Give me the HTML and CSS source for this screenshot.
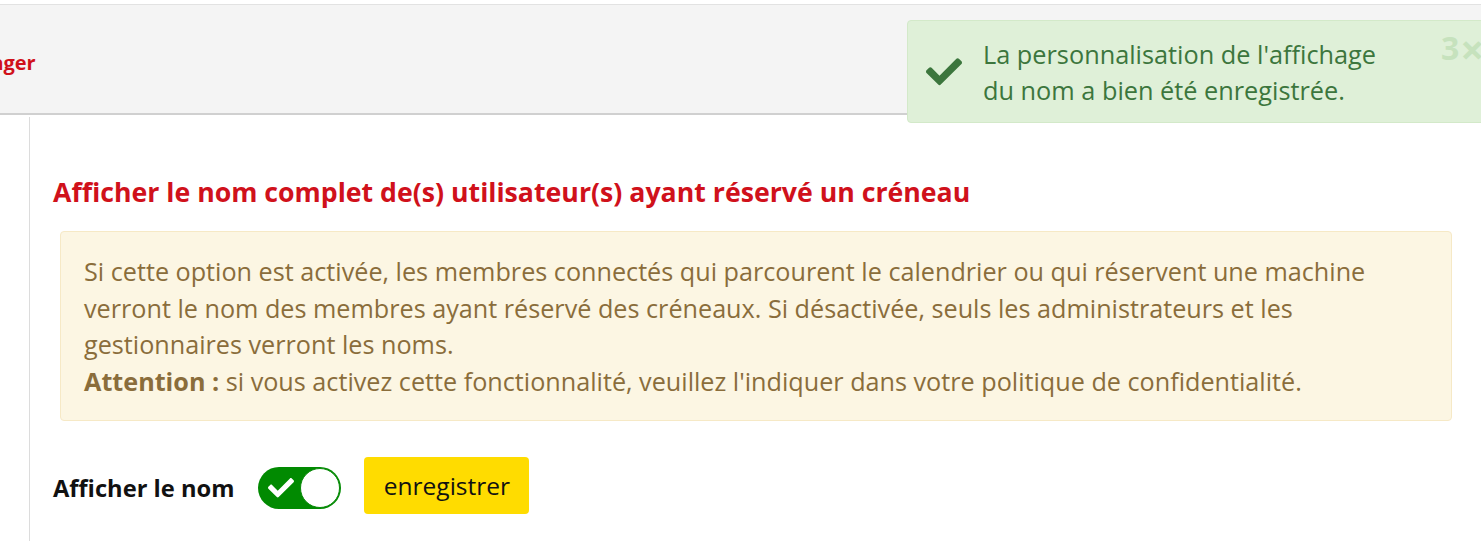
FILE: index.html
```html
<!DOCTYPE html>
<html lang="fr">
<head>
<meta charset="utf-8">
<title>Affichage du nom</title>
<link rel="stylesheet" href="styles.css">
</head>
<body>
<header class="topbar">
  <span class="topbar-title">Aménager</span>
</header>
<div class="layout">
  <aside class="sidebar"></aside>
  <main class="content">
    <h2 class="section-title">Afficher le nom complet de(s) utilisateur(s) ayant réservé un créneau</h2>
    <div class="notice">
      Si cette option est activée, les membres connectés qui parcourent le calendrier ou qui réservent une machine verront le nom des membres ayant réservé des créneaux. Si désactivée, seuls les administrateurs et les gestionnaires verront les noms.<br>
      <strong>Attention :</strong> si vous activez cette fonctionnalité, veuillez l'indiquer dans votre politique de confidentialité.
    </div>
    <form class="form-row">
      <span class="form-label">Afficher le nom</span>
      <span class="toggle">
        <svg class="toggle-check" viewBox="0 64 512 392" width="26" height="20"><path fill="#fff" d="M173.9 439.4 7.5 273c-10-10-10-26.2 0-36.2l36.2-36.2c10-10 26.2-10 36.2 0L192 312.7 432.1 72.6c10-10 26.2-10 36.2 0l36.2 36.2c10 10 10 26.2 0 36.2L210.1 439.4c-10 10-26.2 10-36.2 0z"/></svg>
        <span class="toggle-knob"></span>
      </span>
      <button type="button" class="btn-save">enregistrer</button>
    </form>
  </main>
</div>
<div class="toast">
  <svg class="toast-icon" viewBox="0 64 512 392" width="36" height="28"><path fill="#3c763d" d="M173.9 439.4 7.5 273c-10-10-10-26.2 0-36.2l36.2-36.2c10-10 26.2-10 36.2 0L192 312.7 432.1 72.6c10-10 26.2-10 36.2 0l36.2 36.2c10 10 10 26.2 0 36.2L210.1 439.4c-10 10-26.2 10-36.2 0z"/></svg>
  <p class="toast-text">La personnalisation de l'affichage du nom a bien été enregistrée.</p>
  <span class="toast-count">3<span class="toast-times">×</span></span>
</div>
</body>
</html>
```
FILE: styles.css
```css
html, body {
  margin: 0;
  padding: 0;
  overflow: hidden;
  background: #fff;
}
body {
  font-family: "Open Sans", "Noto Sans", sans-serif;
  color: #000;
  position: relative;
  height: 541px;
}
.topbar {
  margin-top: 4px;
  height: 108px;
  background: #f4f4f4;
  border-top: 1px solid #e2e2e2;
  border-bottom: 2px solid #d0d0d0;
  display: flex;
  align-items: center;
  overflow: hidden;
}
.topbar-title {
  color: #d0111b;
  font-weight: 700;
  font-size: 20px;
  margin-left: -67px;
  margin-top: 6px;
}
.layout {
  display: flex;
  height: 426px;
}
.sidebar {
  width: 29px;
  margin-top: 2px;
  border-right: 1px solid #dcdcdc;
  flex: none;
}
.content {
  flex: 1;
  padding: 61px 29px 0 23px;
}
.section-title {
  margin: 0;
  font-size: 26.7px;
  line-height: 32px;
  font-weight: 700;
  color: #d0111b;
}
.notice {
  margin: 23px 0 0 7px;
  padding: 21px 23px 21px;
  background: #fcf6e3;
  border: 1px solid #f6e9c6;
  border-radius: 4px;
  color: #8a6d3b;
  font-size: 25.2px;
  line-height: 36.5px;
}
.notice strong {
  font-weight: 700;
}
.form-row {
  display: flex;
  align-items: center;
  margin-top: 36px;
}
.form-label {
  font-size: 23.7px;
  font-weight: 700;
  color: #111;
  margin-right: 24px;
  margin-top: 4px;
}
.toggle {
  width: 83px;
  height: 42px;
  border-radius: 21px;
  background: #018a01;
  display: flex;
  align-items: center;
  justify-content: space-between;
  padding: 0 1px 0 10px;
  box-sizing: border-box;
  margin-right: 23px;
  margin-top: 5px;
}
.toggle-check {
  display: block;
}
.toggle-knob {
  width: 40px;
  height: 40px;
  border-radius: 50%;
  background: #fff;
  border: 1px solid #0a8a0a;
  box-sizing: border-box;
}
.btn-save {
  font-family: inherit;
  background: #ffdc00;
  border: none;
  border-radius: 4px;
  width: 165px;
  height: 57px;
  font-size: 24.5px;
  color: #111;
  padding: 0;
}
.toast {
  position: absolute;
  left: 907px;
  top: 20px;
  width: 600px;
  height: 103px;
  box-sizing: border-box;
  background: #dff0d8;
  border: 1px solid #d3e9c9;
  border-radius: 4px;
  display: flex;
  align-items: center;
  padding-left: 18px;
}
.toast-icon {
  flex: none;
  display: block;
}
.toast-text {
  margin: 0 0 0 21px;
  width: 415px;
  color: #3c763d;
  font-size: 25.3px;
  line-height: 36px;
}
.toast-count {
  position: absolute;
  left: 533px;
  top: 11px;
  font-size: 32px;
  line-height: 32px;
  font-weight: 700;
  color: #c6e2bd;
  white-space: nowrap;
}
.toast-times {
  font-size: 42px;
  margin-left: 1px;
  vertical-align: -5px;
}
```
